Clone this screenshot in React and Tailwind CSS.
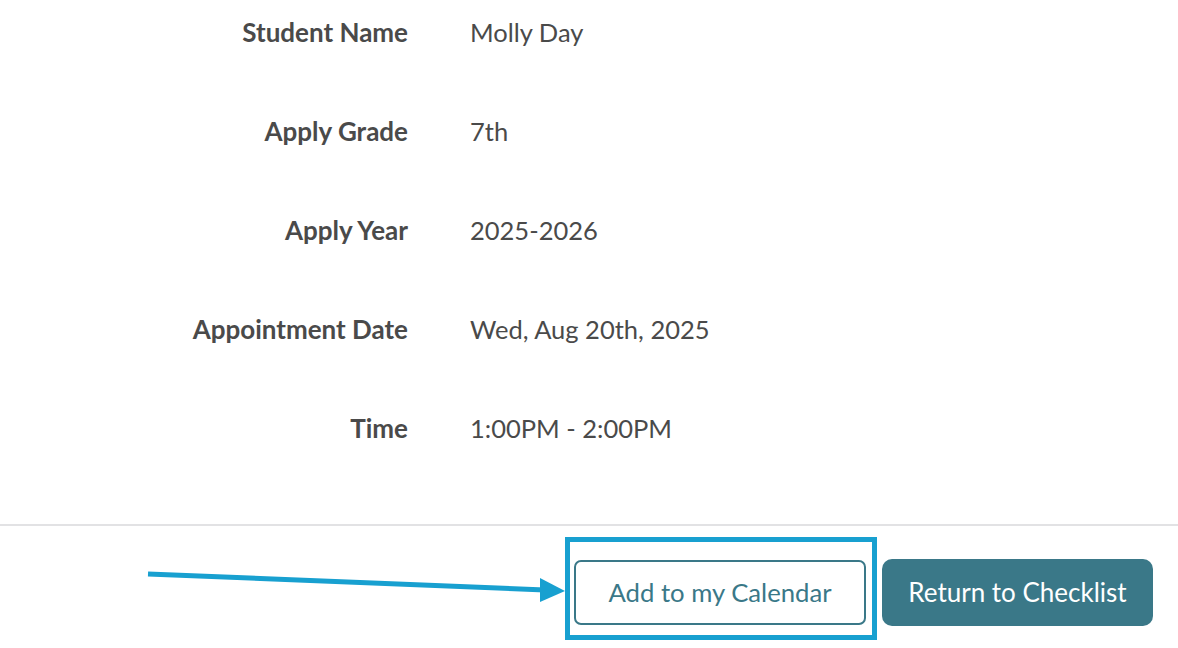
const rows = [
  { label: 'Student Name', value: 'Molly Day' },
  { label: 'Apply Grade', value: '7th' },
  { label: 'Apply Year', value: '2025-2026' },
  { label: 'Appointment Date', value: 'Wed, Aug 20th, 2025' },
  { label: 'Time', value: '1:00PM - 2:00PM' },
]

const App = () => {
  return (
    <main className="relative w-full h-[648px] overflow-hidden bg-white font-['Lato','Liberation_Sans',sans-serif] text-[#4a4a4a]">
      <div className="grid grid-cols-[408px_1fr] gap-x-[62px] gap-y-[69px] pt-[17px] leading-[30px]">
        {rows.map(row => (
          <div key={row.label} className="contents">
            <div className="text-right font-bold text-[26px]">{row.label}</div>
            <div className="text-[25.5px]">{row.value}</div>
          </div>
        ))}
      </div>

      <div className="mt-[81px] h-[2px] w-full bg-[#e2e2e4]"></div>

      <div className="flex justify-end gap-4 pr-[25px] pt-[33px]">
        <div className="relative mt-[1px]">
          <button className="w-[292px] h-[65px] rounded-[7px] border-2 border-[#3a7888] bg-white text-[25.7px] text-[#3a7888]">
            Add to my Calendar
          </button>
          {/* highlight annotation */}
          <div className="absolute -left-[9px] -right-[11px] -top-[23px] -bottom-[14px] border-[5px] border-[#18a0d0] pointer-events-none"></div>
        </div>
        <button className="w-[271px] h-[67px] rounded-[10px] bg-[#3a7888] text-[26px] text-white">
          Return to Checklist
        </button>
      </div>

      {/* arrow annotation */}
      <svg className="absolute left-0 top-0 pointer-events-none" width="1178" height="648">
        <line x1="148" y1="574" x2="545" y2="590" stroke="#18a0d0" strokeWidth="5" />
        <polygon points="540,578 565,591 540,602" fill="#18a0d0" />
      </svg>
    </main>
  )
}

export default App
